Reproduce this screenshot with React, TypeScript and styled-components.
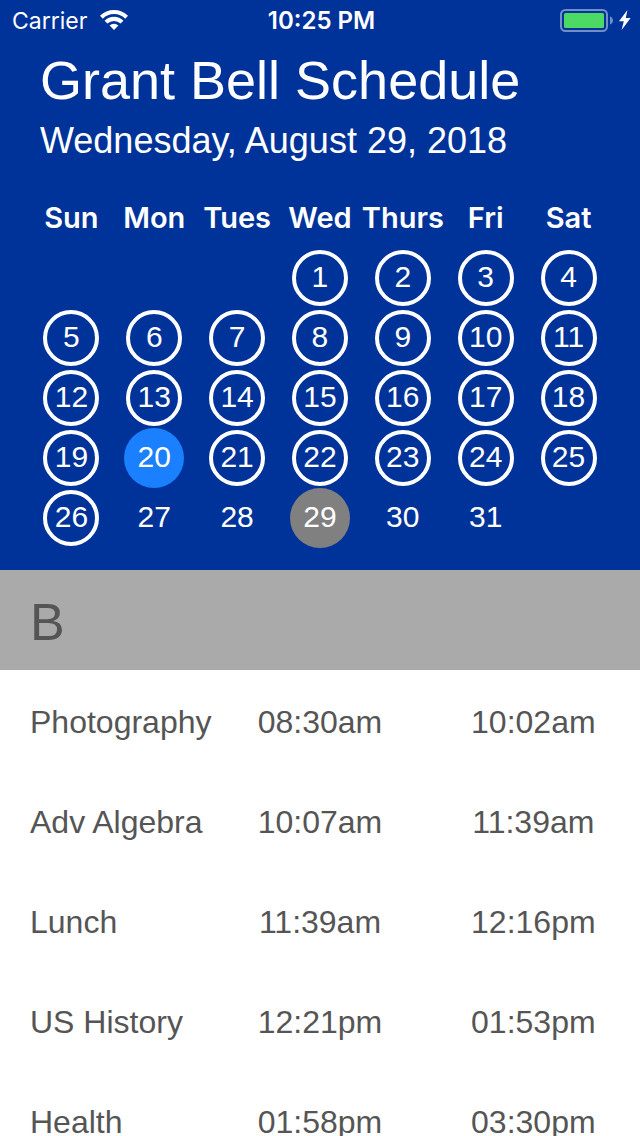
import React from "react";
import styled, { createGlobalStyle, css } from "styled-components";

const GlobalStyle = createGlobalStyle`
  *, *::before, *::after { box-sizing: border-box; }
  body { margin: 0; background: #ffffff; }
`;

const textFont = `"Liberation Sans", Arial, Helvetica, sans-serif`;
const systemFont = `Inter, "Liberation Sans", sans-serif`;

const Screen = styled.div`
  display: flex;
  flex-direction: column;
  height: 100vh;
  font-family: ${textFont};
  color: #555555;
`;

const Header = styled.header`
  flex: none;
  padding-bottom: 22px;
  background: #003399;
  color: #ffffff;
`;

const StatusBar = styled.div`
  display: grid;
  grid-template-columns: 1fr auto 1fr;
  align-items: center;
  height: 40px;
  padding: 0 9px 0 12px;
  font-family: ${systemFont};
  line-height: 38px;
`;

const StatusGroup = styled.div<{ $end?: boolean }>`
  display: flex;
  align-items: center;
  gap: ${(p) => (p.$end ? "5px" : "13px")};
  justify-content: ${(p) => (p.$end ? "flex-end" : "flex-start")};
`;

const Carrier = styled.span`
  padding-top: 2px;
  font-size: 23px;
`;

const Clock = styled.time`
  padding-top: 2px;
  font-size: 24px;
  font-weight: 600;
`;

const Heading = styled.div`
  padding: 8px 40px 0;
`;

const Title = styled.h1`
  margin: 0;
  font-size: 54px;
  font-weight: 400;
  line-height: 64px;
`;

const DateLine = styled.p`
  margin: 8px 0 0;
  font-size: 36px;
  line-height: 42px;
`;

const Calendar = styled.table`
  width: calc(100% - 60px);
  margin: 26px 30px 0;
  table-layout: fixed;
  border-collapse: collapse;
`;

const Weekday = styled.th`
  height: 60px;
  padding: 0;
  font-family: ${systemFont};
  font-size: 29px;
  font-weight: 600;
  line-height: 60px;
  text-align: center;
  white-space: nowrap;
`;

const DayCell = styled.td`
  height: 60px;
  padding: 0;
  text-align: center;
`;

type DayKind = "ring" | "plain" | "today" | "selected";

const dayLook = {
  ring: css`
    width: 56px;
    height: 56px;
    border: 4px solid #ffffff;
  `,
  plain: css``,
  today: css`
    background: #1a80ff;
  `,
  selected: css`
    background: #808080;
  `,
};

const DayButton = styled.button<{ $kind: DayKind }>`
  display: flex;
  align-items: center;
  justify-content: center;
  width: 60px;
  height: 60px;
  margin: 0 auto;
  padding: 0 0 2px;
  border: 0;
  border-radius: 50%;
  background: transparent;
  color: #ffffff;
  font-family: ${textFont};
  font-size: 30px;
  line-height: 34px;
  ${(p) => dayLook[p.$kind]}
`;

const DayType = styled.h2`
  flex: none;
  margin: 0;
  padding: 4px 30px 0;
  background: #aaaaaa;
  font-size: 52px;
  font-weight: 400;
  line-height: 96px;
`;

const ScheduleList = styled.main`
  flex: 1;
  min-height: 0;
  overflow-y: auto;
  scrollbar-width: none;
  background: #ffffff;
`;

const Schedule = styled.table`
  width: 100%;
  table-layout: fixed;
  border-collapse: collapse;
  font-size: 32px;
  line-height: 36px;
`;

const ClassName = styled.th`
  height: 100px;
  padding: 4px 0 0 30px;
  font-weight: 400;
  text-align: left;
  white-space: nowrap;
`;

const ClassTime = styled.td`
  height: 100px;
  padding: 4px 0 0;
  text-align: center;
`;

const weekdays = ["Sun", "Mon", "Tues", "Wed", "Thurs", "Fri", "Sat"];
const firstWeekday = 3;
const daysInMonth = 31;
const today = 20;
const selected = 29;
const lastRinged = 26;

const weeks = Array.from({ length: 5 }, (_, week) =>
  Array.from({ length: 7 }, (_, i) => {
    const day = week * 7 + i - firstWeekday + 1;
    return day >= 1 && day <= daysInMonth ? day : null;
  })
);

const kindOf = (day: number): DayKind => {
  if (day === today) return "today";
  if (day === selected) return "selected";
  return day <= lastRinged ? "ring" : "plain";
};

const classes = [
  ["Photography", "08:30am", "10:02am"],
  ["Adv Algebra", "10:07am", "11:39am"],
  ["Lunch", "11:39am", "12:16pm"],
  ["US History", "12:21pm", "01:53pm"],
  ["Health", "01:58pm", "03:30pm"],
];

const WifiIcon = () => (
  <svg width="28" height="20" viewBox="0 0 28 20" aria-label="Wi-Fi" role="img">
    <g fill="none" stroke="#ffffff" strokeWidth="4.1">
      <path d="M1.4 7.200a18 18 0 0 1 25.200 0" />
      <path d="M6 12.100a11.500 11.500 0 0 1 16 0" />
    </g>
    <path d="M14 20l-4.400-4.500a6.400 6.400 0 0 1 8.800 0z" fill="#ffffff" />
  </svg>
);

const BatteryIcon = () => (
  <svg width="54" height="24" viewBox="0 -1 54 24" aria-label="Battery full" role="img">
    <rect x="1" y="1" width="46" height="21" rx="4.5" fill="none" stroke="#ffffff" strokeOpacity="0.45" strokeWidth="2" />
    <rect x="4" y="4" width="40" height="15" rx="1.5" fill="#4cd964" />
    <path d="M50 7.500c1.800.6 3 2.200 3 4s-1.200 3.400-3 4z" fill="#ffffff" fillOpacity="0.45" />
  </svg>
);

const BoltIcon = () => (
  <svg width="12" height="20" viewBox="0 0 12 20" aria-label="Charging" role="img">
    <path d="M8.400 0L0 11.200h4.800L2.600 20l9-12H6.800z" fill="#ffffff" />
  </svg>
);

export default function App() {
  return (
    <Screen>
      <GlobalStyle />
      <Header>
        <StatusBar>
          <StatusGroup>
            <Carrier>Carrier</Carrier>
            <WifiIcon />
          </StatusGroup>
          <Clock>10:25 PM</Clock>
          <StatusGroup $end>
            <BatteryIcon />
            <BoltIcon />
          </StatusGroup>
        </StatusBar>
        <Heading>
          <Title>Grant Bell Schedule</Title>
          <DateLine>Wednesday, August 29, 2018</DateLine>
        </Heading>
        <Calendar>
          <thead>
            <tr>
              {weekdays.map((name) => (
                <Weekday key={name} scope="col">{name}</Weekday>
              ))}
            </tr>
          </thead>
          <tbody>
            {weeks.map((week, w) => (
              <tr key={w}>
                {week.map((day, i) => (
                  <DayCell key={i}>
                    {day !== null && (
                      <DayButton type="button" $kind={kindOf(day)}>{day}</DayButton>
                    )}
                  </DayCell>
                ))}
              </tr>
            ))}
          </tbody>
        </Calendar>
      </Header>
      <DayType>B</DayType>
      <ScheduleList>
        <Schedule>
          <tbody>
            {classes.map(([name, start, end]) => (
              <tr key={name}>
                <ClassName scope="row">{name}</ClassName>
                <ClassTime>{start}</ClassTime>
                <ClassTime>{end}</ClassTime>
              </tr>
            ))}
          </tbody>
        </Schedule>
      </ScheduleList>
    </Screen>
  );
}
